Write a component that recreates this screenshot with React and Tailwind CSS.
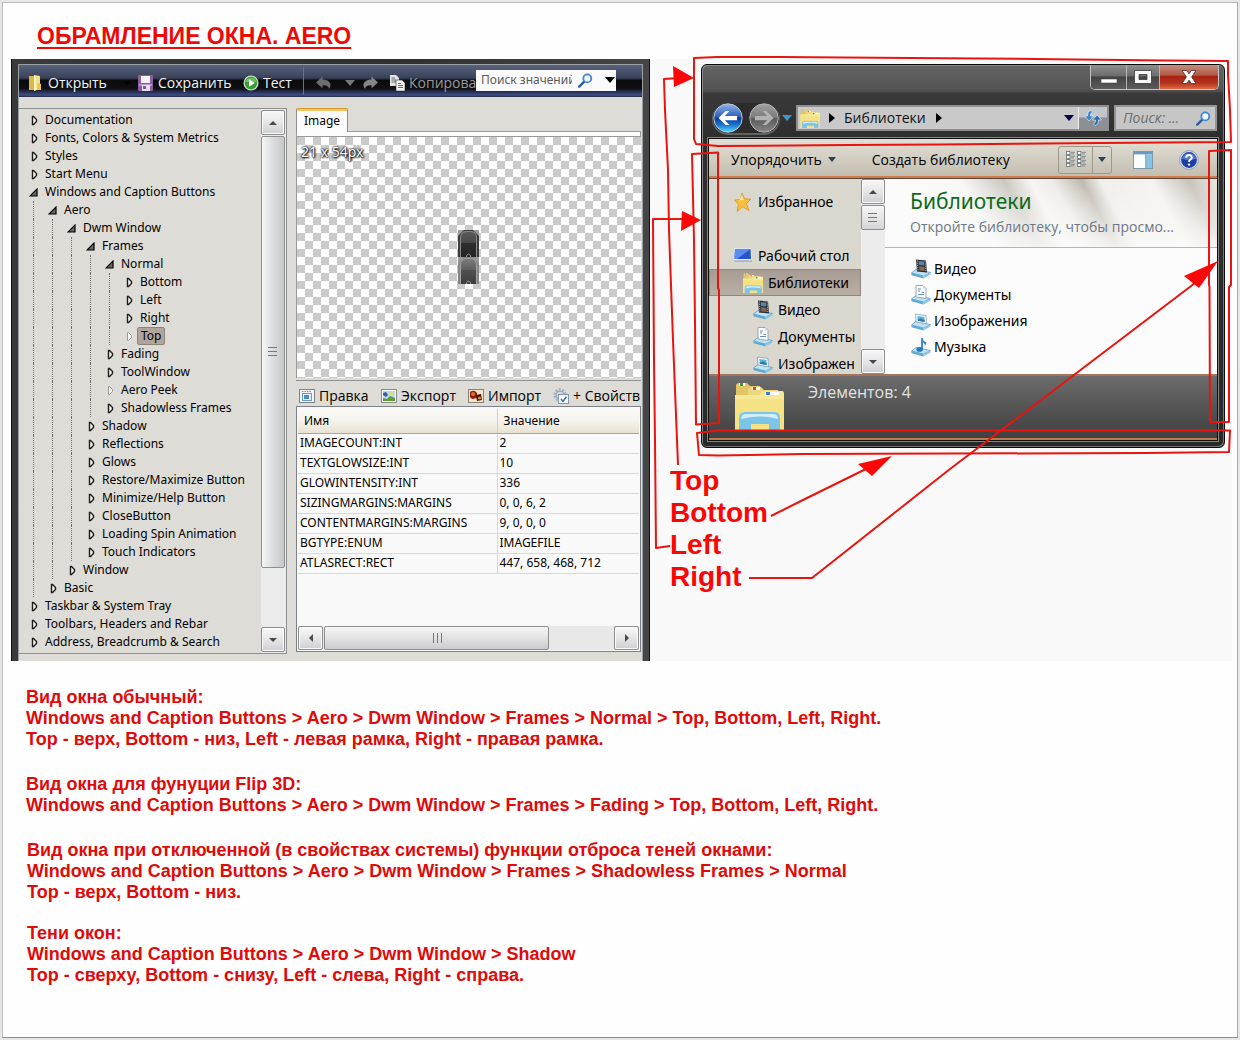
import React from "react";

const treeRows = [
  [0, "Documentation"],
  [0, "Fonts, Colors & System Metrics"],
  [0, "Styles"],
  [0, "Start Menu"],
  [0, "Windows and Caption Buttons", "open"],
  [1, "Aero", "open"],
  [2, "Dwm Window", "open"],
  [3, "Frames", "open"],
  [4, "Normal", "open"],
  [5, "Bottom"],
  [5, "Left"],
  [5, "Right"],
  [5, "Top", "selected"],
  [4, "Fading"],
  [4, "ToolWindow"],
  [4, "Aero Peek", "leaf"],
  [4, "Shadowless Frames"],
  [3, "Shadow"],
  [3, "Reflections"],
  [3, "Glows"],
  [3, "Restore/Maximize Button"],
  [3, "Minimize/Help Button"],
  [3, "CloseButton"],
  [3, "Loading Spin Animation"],
  [3, "Touch Indicators"],
  [2, "Window"],
  [1, "Basic"],
  [0, "Taskbar & System Tray"],
  [0, "Toolbars, Headers and Rebar"],
  [0, "Address, Breadcrumb & Search"],
];

const properties = [
  ["IMAGECOUNT:INT", "2"],
  ["TEXTGLOWSIZE:INT", "10"],
  ["GLOWINTENSITY:INT", "336"],
  ["SIZINGMARGINS:MARGINS", "0, 0, 6, 2"],
  ["CONTENTMARGINS:MARGINS", "9, 0, 0, 0"],
  ["BGTYPE:ENUM", "IMAGEFILE"],
  ["ATLASRECT:RECT", "447, 658, 468, 712"],
];

const notes = [
  {
    className: "ml-[23px] mt-[26px]",
    lines: [
      "Вид окна обычный:",
      "Windows and Caption Buttons > Aero > Dwm Window > Frames > Normal > Top, Bottom, Left, Right.",
      "Top - верх, Bottom - низ, Left - левая рамка, Right - правая рамка.",
    ],
  },
  {
    className: "ml-[23px] mt-6",
    lines: [
      "Вид окна для фунуции Flip 3D:",
      "Windows and Caption Buttons > Aero > Dwm Window > Frames > Fading > Top, Bottom, Left, Right.",
    ],
  },
  {
    className: "ml-6 mt-6",
    lines: [
      "Вид окна при отключенной (в свойствах системы) функции отброса теней окнами:",
      "Windows and Caption Buttons > Aero > Dwm Window > Frames > Shadowless Frames > Normal",
      "Top - верх, Bottom - низ.",
    ],
  },
  {
    className: "ml-6 mt-5",
    lines: [
      "Тени окон:",
      "Windows and Caption Buttons > Aero > Dwm Window > Shadow",
      "Top - сверху, Bottom - снизу, Left - слева, Right - справа.",
    ],
  },
];

/* ---------- icons ---------- */

function OpenFolderIcon() {
  return (
    <svg className="h-4 w-[14px] shrink-0" viewBox="0 0 14 16">
      <path d="M1 1 L7 1 L7 15 L1 15 Z" fill="#d9b94c" />
      <path d="M6 0 L12 1 L12 14 L6 16 Z" fill="#f3e08a" />
      <path d="M6 0 L8 2 L8 15 L6 16 Z" fill="#fff6c4" />
      <path d="M10 8 L13 9 L13 15 L9 15 Z" fill="#e6c65e" />
    </svg>
  );
}

function SaveIcon() {
  return (
    <svg className="h-4 w-[15px] shrink-0" viewBox="0 0 15 16">
      <rect x="0" y="0" width="15" height="16" rx="1" fill="#8a5f9e" />
      <rect x="3" y="1" width="9" height="7" fill="#f6f2f8" />
      <rect x="1" y="9" width="13" height="2" fill="#b795c6" />
      <rect x="4" y="10" width="8" height="6" fill="#e8e0ec" />
      <rect x="5" y="11" width="3" height="3" fill="#7d5c90" />
    </svg>
  );
}

function PlayIcon() {
  return (
    <svg className="h-4 w-4 shrink-0" viewBox="0 0 16 16">
      <circle cx="8" cy="8" r="7.5" fill="#dfeedd" />
      <circle cx="8" cy="8" r="6.4" fill="#3a9a35" />
      <path d="M2 7 A6.4 6.4 0 0 1 14 7 Z" fill="#6cc062" />
      <path d="M6 4.2 L11.8 8 L6 11.8 Z" fill="#fff" />
    </svg>
  );
}

function UndoArrow({ flip }) {
  return (
    <svg className={flip ? "h-[14px] w-[15px] shrink-0 -scale-x-100" : "h-[14px] w-[15px] shrink-0"} viewBox="0 0 15 14">
      <path d="M0 6.5 L6.5 0.5 L6.5 3.5 C11.5 3.5 14.5 6 14.5 9 C14.5 10.5 14 11.8 12.8 12.8 C12.8 10.5 10.5 9 6.5 9.3 L6.5 12.2 Z" fill={flip ? "#86868a" : "#6d6d72"} />
    </svg>
  );
}

function CopyIcon() {
  return (
    <svg className="h-4 w-[15px] shrink-0" viewBox="0 0 15 16">
      <path d="M0 0 H6 L9 3 V11 H0 Z" fill="#e4e4e4" />
      <path d="M1.5 3 H5 M1.5 5 H6 M1.5 7 H6" stroke="#666" />
      <path d="M6 5 H12 L15 8 V16 H6 Z" fill="#f4f4f4" stroke="#333" strokeWidth="0.6" />
      <path d="M8 8.5 H11 M8 10.5 H13 M8 12.5 H13" stroke="#666" />
    </svg>
  );
}

function MagnifierIcon() {
  return (
    <svg className="h-[15px] w-[15px] shrink-0" viewBox="0 0 15 15">
      <path d="M1.2 13.6 L6 8.8" stroke="#2d5f9e" strokeWidth="2.4" strokeLinecap="round" />
      <circle cx="9.3" cy="5.4" r="4" fill="#eef5fc" stroke="#4286cf" strokeWidth="1.8" />
    </svg>
  );
}

function TriangleDown({ color = "#000", wide }) {
  return (
    <svg className={wide ? "h-[6px] w-[10px] shrink-0" : "h-[5px] w-[8px] shrink-0"} viewBox="0 0 10 6" preserveAspectRatio="none">
      <path d="M0 0 H10 L5 6 Z" fill={color} />
    </svg>
  );
}

function TriangleRight() {
  return (
    <svg className="h-[10px] w-[6px] shrink-0" viewBox="0 0 6 10">
      <path d="M0 0 L6 5 L0 10 Z" fill="#000" />
    </svg>
  );
}

function TreeMarker({ state }) {
  if (state === "open") {
    return (
      <svg className="h-[9px] w-[9px]" viewBox="0 0 9 9">
        <path d="M8 1 V8 H1 Z" fill="#6a6a6a" stroke="#000" strokeWidth="1.2" />
      </svg>
    );
  }
  const faint = state === "leaf" || state === "selected";
  return (
    <svg className="ml-[2px] h-[11px] w-[9px]" viewBox="0 0 9 11">
      <path d="M2.5 1.5 V9.5 H3.5 L6.5 6.5 V4.5 L3.5 1.5 Z" fill="#f4f3f0" stroke={faint ? "#9a9a98" : "#1c1c1c"} strokeWidth={faint ? "1" : "1.4"} />
    </svg>
  );
}

function LibraryIcon({ className }) {
  return (
    <svg className={className} viewBox="0 0 50 48" preserveAspectRatio="xMidYMin slice">
      <path d="M2 4 Q2 1 5 1 H13 L16 4 H26 V44 H2 Z" fill="#e3c566" />
      <rect x="5" y="1" width="6" height="3" fill="#fff" />
      <rect x="6" y="1" width="3" height="3" fill="#3d9b3a" />
      <path d="M14 9 Q14 5 17 5 H27 L30 8 H44 V44 H14 Z" fill="#eed67c" />
      <rect x="18" y="5" width="8" height="3" fill="#fff" />
      <rect x="19" y="5" width="3" height="3" fill="#d04a2a" />
      <path d="M1 13 H25 L29 9 H48 Q50 9 50 12 V48 H1 Z" fill="#f6e896" />
      <rect x="31" y="10" width="14" height="3" fill="#fff" />
      <rect x="32" y="10" width="4" height="3" fill="#3a82c4" />
      <path d="M1 17 H50 V48 H1 Z" fill="#f3df7e" opacity="0.7" />
      <path d="M5 48 V36 Q5 30 11 30 H40 Q46 30 46 36 V48 H35 V42 H17 V48 Z" fill="#7cc4e8" />
      <path d="M7 37 Q7 32 12 32 H39 Q44 32 44 37 Q25 32 7 37 Z" fill="#d2eefa" />
    </svg>
  );
}

function StarIcon() {
  return (
    <svg className="h-5 w-[18px] shrink-0" viewBox="0 0 18 20">
      <path d="M8 1 L10.6 7 L17 7 L12.4 11.6 L15 18.5 L8.6 14.8 L3 19.4 L4.4 12.4 L0.6 8 L6.4 7.4 Z" fill="#f7bf3c" stroke="#dc9426" strokeWidth="0.8" />
      <path d="M8 3 L9.6 8 L5 8.6 Z" fill="#fde79a" />
    </svg>
  );
}

function DesktopIcon() {
  return (
    <svg className="h-[15px] w-[19px] shrink-0" viewBox="0 0 19 15">
      <path d="M1 0 H18 L19 12 H1 Z" fill="#dfe6f2" />
      <path d="M2 1 H17.5 L18 11 H1.5 Z" fill="#2555c8" />
      <path d="M2 1 H17.5 L4 11 H1.5 Z" fill="#5b8cf0" />
      <path d="M1 12.5 H19 V14 H2 Z" fill="#9db4cc" />
    </svg>
  );
}

function Tray() {
  return (
    <g>
      <path d="M0.5 14 L5 10.5 L19.5 13.5 L12.5 17 Z" fill="#bfe3f4" stroke="#4d94bb" strokeWidth="0.7" />
      <path d="M0.5 14 L12.5 17 V19.4 L0.5 16.2 Z" fill="#5fa9d2" />
      <path d="M12.5 17 L19.5 13.5 V15.6 L12.5 19.4 Z" fill="#8cc7e4" />
    </g>
  );
}

function LibraryItemIcon({ kind }) {
  return (
    <svg className="h-5 w-5 shrink-0" viewBox="0 0 20 20">
      <Tray />
      {kind === "video" && (
        <g>
          <path d="M5 0.5 L15 1.5 L16 13.5 L6 12.5 Z" fill="#262b33" />
          <path d="M7.6 2 L13 2.6 L13.3 6.6 L7.9 6 Z" fill="#5d84a6" />
          <path d="M8 7.2 L13.4 7.8 L13.8 12 L8.3 11.4 Z" fill="#83674e" />
          <path d="M6.4 1.5 L7 12" stroke="#dde" strokeWidth="0.9" strokeDasharray="1 1.2" />
          <path d="M14.2 2.3 L14.9 12.8" stroke="#dde" strokeWidth="0.9" strokeDasharray="1 1.2" />
        </g>
      )}
      {kind === "docs" && (
        <g>
          <path d="M5 0.5 H12 L15 3.5 V13.5 L5 12 Z" fill="#fbfcfe" stroke="#8895a8" strokeWidth="0.8" />
          <path d="M12 0.5 L12 3.5 H15 Z" fill="#c8d4e4" />
          <path d="M7 4 H10 M7 6 H9 M10.5 7.5 H13 M7 9.5 H13" stroke="#5a7fb5" strokeWidth="0.9" />
        </g>
      )}
      {kind === "images" && (
        <g>
          <path d="M4.5 3 L15 4.5 L15.5 12.8 L5 11 Z" fill="#f2f7fb" stroke="#86a2ba" strokeWidth="0.8" />
          <path d="M6.4 5 L13.4 6 L13.7 11 L6.8 9.8 Z" fill="#57b2dc" />
          <path d="M6.7 8.4 L10 7.6 L13.7 9.4 V11 L6.8 9.8 Z" fill="#2f7a94" />
        </g>
      )}
      {kind === "music" && (
        <g>
          <path d="M11 1 V12" stroke="#1c6eb8" strokeWidth="1.6" />
          <path d="M11 1 Q12 4 15.5 5.5 Q14.5 8 13.5 9 Q14.5 6.6 11 5 Z" fill="#2f86cf" />
          <ellipse cx="8.6" cy="12.4" rx="3.2" ry="2.4" fill="#2479c4" />
        </g>
      )}
    </svg>
  );
}

function NavCircle({ back }) {
  return (
    <svg className="h-[30px] w-[30px]" viewBox="0 0 30 30">
      <defs>
        <linearGradient id="navBlue" x1="0" y1="0" x2="0" y2="1">
          <stop offset="0" stopColor="#8fb4e8" />
          <stop offset="0.45" stopColor="#2e62bb" />
          <stop offset="0.5" stopColor="#0c3a92" />
          <stop offset="0.75" stopColor="#1a78d0" />
          <stop offset="1" stopColor="#59dcff" />
        </linearGradient>
        <linearGradient id="navGray" x1="0" y1="0" x2="0" y2="1">
          <stop offset="0" stopColor="#a2a2a2" />
          <stop offset="0.48" stopColor="#7a7a7a" />
          <stop offset="0.52" stopColor="#5a5a5a" />
          <stop offset="1" stopColor="#868686" />
        </linearGradient>
      </defs>
      <circle cx="15" cy="15" r="14.2" fill={back ? "url(#navBlue)" : "url(#navGray)"} stroke={back ? "#b9c6d8" : "#b4b4b4"} strokeWidth="1" />
      {back ? (
        <path d="M5.5 15 L12.6 8 H16.4 L11.8 13 H24 V17.2 H11.8 L16.4 22 H12.6 Z" fill="#fff" />
      ) : (
        <path d="M24.5 15 L17.4 8 H13.6 L18.2 13 H6 V17.2 H18.2 L13.6 22 H17.4 Z" fill="#b2b2b2" />
      )}
    </svg>
  );
}

function RefreshIcon() {
  return (
    <svg className="h-4 w-[18px]" viewBox="0 0 18 16">
      <path d="M7 0.5 C4.5 1 3.5 3 3.5 6 H0.5 L5 11 L9.5 6 H6.5 C6.5 4 7 3 8.5 2 Z" fill="#3e86cc" stroke="#e4eef8" strokeWidth="0.7" />
      <path d="M11 15.5 C13.5 15 14.5 13 14.5 10 H17.5 L13 5 L8.5 10 H11.5 C11.5 12 11 13 9.5 14 Z" fill="#2b6db6" stroke="#e4eef8" strokeWidth="0.7" />
    </svg>
  );
}

function ViewIcon() {
  return (
    <svg className="h-[17px] w-5" viewBox="0 0 20 17">
      {[0, 11].map((x) =>
        [0.5, 4.5, 8.5, 12.5].map((y) => (
          <g key={x + "-" + y}>
            <rect x={x + 0.5} y={y} width="3.4" height="3" fill="#fff" stroke="#6d7c82" strokeWidth="0.9" />
            <path d={`M${x + 5} ${y + 0.8} h4 M${x + 5} ${y + 2.4} h3`} stroke="#6d7c82" strokeWidth="0.8" />
          </g>
        ))
      )}
    </svg>
  );
}

function PaneIcon() {
  return (
    <svg className="h-[18px] w-5" viewBox="0 0 20 18">
      <rect x="0.5" y="0.5" width="19" height="17" fill="#fdfdfd" stroke="#7d97ab" />
      <rect x="1" y="1" width="18" height="2.4" fill="#6c9ac4" />
      <rect x="13" y="3.4" width="6" height="13.6" fill="#86c6e2" />
      <path d="M12.7 1 V17" stroke="#5d8dae" strokeWidth="0.8" />
    </svg>
  );
}

function HelpIcon() {
  return (
    <svg className="h-5 w-5" viewBox="0 0 20 20">
      <circle cx="10" cy="10" r="9.4" fill="#d5dbec" stroke="#8b93ad" strokeWidth="0.8" />
      <circle cx="10" cy="10" r="7.9" fill="#1d3fa4" />
      <path d="M2.8 8.6 A7.5 7.5 0 0 1 17.2 8.6 Q10 12 2.8 8.6 Z" fill="#5277d2" />
      <path d="M7.2 7.8 C7.2 4 13 4.2 12.8 7.6 C12.7 9.6 10 9.6 10 12" fill="none" stroke="#fff" strokeWidth="1.9" />
      <circle cx="10" cy="14.6" r="1.2" fill="#fff" />
    </svg>
  );
}

function FormIcon() {
  return (
    <svg className="h-[14px] w-4 shrink-0" viewBox="0 0 16 14">
      <rect x="0.5" y="0.5" width="15" height="13" fill="#f3f4f6" stroke="#7b828c" />
      <rect x="3.5" y="4.5" width="9" height="7" fill="#e9f2fa" stroke="#6c9cc4" />
      <rect x="5" y="6" width="5" height="4" fill="#4b8fc7" />
      <path d="M3 2.5 H13" stroke="#7f93a8" strokeDasharray="1.5 1" />
    </svg>
  );
}

function ExportIcon() {
  return (
    <svg className="h-[14px] w-4 shrink-0" viewBox="0 0 16 14">
      <rect x="0.5" y="0.5" width="15" height="13" fill="#fff" stroke="#8a8a86" />
      <rect x="2" y="2" width="12" height="10" fill="#b4daf6" />
      <path d="M2 12 V9 L6 10 L9 7 L14 9 V12 Z" fill="#5f9c3c" />
      <path d="M2 4 L5 3 L7 6 L5 8 L2 6 Z" fill="#375e9f" />
      <path d="M7 7 L9 3 L13 4 L13 7 Z" fill="#dfe06a" />
    </svg>
  );
}

function ImportIcon() {
  return (
    <svg className="h-[14px] w-4 shrink-0" viewBox="0 0 16 14">
      <rect x="0.5" y="0.5" width="15" height="13" fill="#f3e2c7" stroke="#8a8378" />
      <path d="M2 3 Q6 0 9 4 L9 9 L4 10 L2 8 Z" fill="#8f1c10" />
      <circle cx="5" cy="5" r="2" fill="#d9722a" />
      <path d="M8 6 L13 5 L14 11 L9 12 Z" fill="#4a160c" />
      <circle cx="11.5" cy="9" r="1.6" fill="#d88a3c" />
    </svg>
  );
}

function GearCheckIcon() {
  return (
    <svg className="h-4 w-4 shrink-0" viewBox="0 0 16 16">
      <circle cx="7" cy="7" r="5" fill="none" stroke="#a3b6c8" strokeWidth="3.4" strokeDasharray="2 1.1" />
      <circle cx="7" cy="7" r="4" fill="#cbd9e4" stroke="#8fa5ba" />
      <rect x="5.5" y="6.5" width="10" height="9" fill="#f6fafd" stroke="#8496a8" />
      <path d="M8 11 L10 13.4 L13.4 8.8" fill="none" stroke="#2878b8" strokeWidth="1.5" />
    </svg>
  );
}

/* ---------- scroll bars ---------- */

function ScrollArrow({ direction, className }) {
  const paths = {
    up: "M1 7 L5 3 L9 7 Z",
    down: "M1 3 L5 7 L9 3 Z",
    left: "M7 1 L3 5 L7 9 Z",
    right: "M3 1 L7 5 L3 9 Z",
  };
  return (
    <button
      type="button"
      aria-label={direction}
      className={"flex shrink-0 items-center justify-center rounded-[2px] border border-[#8d8d8d] bg-linear-to-b from-[#f8f8f8] via-[#e6e6e8] to-[#cfcfd3] shadow-[inset_0_0_0_1px_#fafafa] " + className}
    >
      <svg className="h-[10px] w-[10px]" viewBox="0 0 10 10">
        <path d={paths[direction]} fill="#4a4a4a" />
      </svg>
    </button>
  );
}

function Grip({ vertical }) {
  return (
    <svg className="h-3 w-3" viewBox="0 0 12 12">
      {vertical ? (
        <path d="M2.5 1 V11 M6.5 1 V11 M10.5 1 V11" stroke="#777" />
      ) : (
        <path d="M1 1.5 H10 M1 5.5 H10 M1 9.5 H10" stroke="#777" />
      )}
    </svg>
  );
}

/* ---------- style editor ---------- */

function ToolbarButton({ icon, children, className = "" }) {
  return (
    <button type="button" className={"flex items-center whitespace-nowrap " + className}>
      {icon}
      <span>{children}</span>
    </button>
  );
}

function EditorToolbar() {
  return (
    <div className="flex h-8 items-center bg-[linear-gradient(180deg,#59627c_0%,#3c445c_38%,#2a3044_44%,#0b0b0d_47%,#101014_74%,#2c3760_86%,#3e4d86_94%,#23283c_100%)] pt-1 font-['Open_Sans','Noto_Sans',sans-serif] text-sm text-[#f2f4f8]">
      <ToolbarButton icon={<OpenFolderIcon />} className="ml-[9px] w-[88px] gap-[6px]">Открыть</ToolbarButton>
      <span className="flex w-[22px] justify-center">
        <TriangleDown color="#050505" />
      </span>
      <ToolbarButton icon={<SaveIcon />} className="w-[105px] gap-[5px]">Сохранить</ToolbarButton>
      <ToolbarButton icon={<PlayIcon />} className="w-[60px] gap-1">Тест</ToolbarButton>
      <span className="-mt-1 h-7 w-px bg-[#6b7288]" />
      <button type="button" aria-label="Отменить" className="ml-3">
        <UndoArrow />
      </button>
      <span className="ml-[14px] mr-2">
        <TriangleDown color="#77777b" wide />
      </span>
      <button type="button" aria-label="Повторить" className="mr-3">
        <UndoArrow flip />
      </button>
      <ToolbarButton icon={<CopyIcon />} className="w-[86px] gap-1 text-[#98989c]">Копирова</ToolbarButton>
      <div className="-mt-[6px] mr-[26px] flex h-[21px] min-w-0 flex-1 items-center bg-[#fafafa]">
        <input
          aria-label="Поиск значений"
          placeholder="Поиск значений"
          className="ml-[5px] w-[91px] min-w-0 bg-transparent font-['Noto_Sans',sans-serif] text-xs text-[#444] outline-none placeholder:text-[#5a5a5a]"
        />
        <span className="ml-[6px] mr-3">
          <MagnifierIcon />
        </span>
        <TriangleDown wide />
      </div>
    </div>
  );
}

function TreePanel() {
  return (
    <div className="flex w-[268px] shrink-0 border border-l-0 border-[#8f8f8f] bg-[#dedcd6]">
      <ul role="tree" className="min-w-0 flex-1 pb-[2px] pt-[2px] font-['Noto_Sans',sans-serif] text-xs text-black">
        {treeRows.map(([depth, label, state]) => (
          <li key={label + depth} role="treeitem" className="flex h-[18px] items-center pl-[5px]">
            {Array.from({ length: depth }, (_, i) => (
              <span key={i} className="h-full w-[19px] shrink-0 pl-[9px]">
                <span className="block h-full w-px border-l border-dotted border-[#6f6f6f]" />
              </span>
            ))}
            <span className="flex h-full w-[19px] shrink-0 items-center justify-center">
              <TreeMarker state={state} />
            </span>
            <span
              className={
                state === "selected"
                  ? "-ml-px whitespace-nowrap rounded-[2px] border border-[#8c837b] bg-[#b0a59b] px-[3px] leading-4"
                  : "whitespace-nowrap pl-[2px] leading-4"
              }
            >
              {label}
            </span>
          </li>
        ))}
      </ul>
      <div className="flex w-[25px] shrink-0 flex-col bg-[#ebebeb] py-px pr-[1px]">
        <ScrollArrow direction="up" className="h-[25px]" />
        <div className="mt-px flex h-[432px] items-center justify-center rounded-[2px] border border-[#909090] bg-linear-to-r from-[#f6f6f6] via-[#dcdde0] to-[#c6c7cb]">
          <Grip />
        </div>
        <div className="flex-1" />
        <ScrollArrow direction="down" className="h-[25px]" />
      </div>
    </div>
  );
}

function AtlasPiece({ light }) {
  const id = light ? "atlasLight" : "atlasDark";
  return (
    <svg className="block h-[27px] w-[21px]" viewBox="0 0 21 27">
      <defs>
        <linearGradient id={id} x1="0" y1="0" x2="0" y2="1">
          <stop offset="0" stopColor={light ? "#7c7c7c" : "#5c5c5c"} />
          <stop offset="0.44" stopColor={light ? "#606060" : "#484848"} />
          <stop offset="0.46" stopColor={light ? "#505050" : "#2e2e2e"} />
          <stop offset="1" stopColor={light ? "#3e3e3e" : "#242424"} />
        </linearGradient>
      </defs>
      <rect width="21" height="27" fill={light ? "#858585" : "#3c3c3c"} />
      <path d="M0 0 H6 L0 6 Z M21 0 H15 L21 6 Z" fill="#9c9c9c" />
      <path d="M2.5 27 V8 Q2.5 1.5 8.5 1.5 H12.5 Q18.5 1.5 18.5 8 V27" fill={`url(#${id})`} stroke={light ? "#a4a4a4" : "#8d8d8d"} />
      <path d="M8.5 27 V25.5 Q10.5 22.5 12.5 25.5 V27" fill="none" stroke="#9d9d9d" />
    </svg>
  );
}

function ImagePreview() {
  return (
    <div>
      <div className="flex h-[23px] items-stretch">
        <button type="button" role="tab" className="relative -mb-px w-[52px] rounded-t-[2px] border border-b-0 border-[#8e8f8f] border-t-[#d9982f] bg-[#fcfcfc] font-['Noto_Sans',sans-serif] text-xs text-black shadow-[inset_0_2px_0_#f5c463]">
          Image
        </button>
      </div>
      <div className="h-[6px] border border-[#9a9a98] bg-[#fcfcfc]" />
      <div className="flex h-[241px] flex-col border-l border-[#9a9a98] bg-white bg-[conic-gradient(#fff_0_25%,#cbcbcb_0_50%,#fff_0_75%,#cbcbcb_0)] bg-size-[16px_16px]">
        <span className="mt-[6px] pl-1 font-['Noto_Sans',sans-serif] text-sm leading-[18px] text-white [text-shadow:0_0_2px_#000,0_0_2px_#000,1px_1px_2px_#000]">21 x 54px</span>
        <div className="mr-[2px] mt-[69px] self-center">
          <AtlasPiece />
          <AtlasPiece light />
        </div>
      </div>
      <div className="mt-[2px] h-px bg-[#8f8f8f]" />
    </div>
  );
}

function PropertyList() {
  return (
    <div className="mb-[2px] flex flex-1 flex-col border border-[#7d8289] bg-[#f9f9f9]">
      <div className="flex-1 px-px pt-[2px]">
        <table className="w-full table-fixed border-collapse font-['Noto_Sans',sans-serif] text-xs text-black">
          <thead>
            <tr className="h-6 bg-linear-to-b from-[#fbfaf7] via-[#f6f3ec] to-[#e9e2d3]">
              <th className="w-[199px] border-b border-r border-b-[#b3a585] border-r-[#d5cfc2] pl-[6px] text-left font-normal">Имя</th>
              <th className="border-b border-b-[#b3a585] pl-[6px] text-left font-normal">Значение</th>
            </tr>
          </thead>
          <tbody>
            {properties.map(([name, value]) => (
              <tr key={name} className="h-5">
                <td className="border-b border-r border-[#d8d8d6] pl-[2px] leading-4">{name}</td>
                <td className="border-b border-[#d8d8d6] pl-[2px] leading-4">{value}</td>
              </tr>
            ))}
          </tbody>
        </table>
      </div>
      <div className="flex h-[25px] px-px pb-px">
        <div className="flex min-w-0 flex-1 bg-[#e8e8e8]">
          <ScrollArrow direction="left" className="w-[25px]" />
          <div className="ml-px flex w-[225px] items-center justify-center rounded-[2px] border border-[#8d8d8d] bg-linear-to-b from-[#f6f6f6] via-[#e2e2e4] to-[#cbcbcf]">
            <Grip vertical />
          </div>
          <div className="flex-1" />
          <ScrollArrow direction="right" className="w-[25px]" />
        </div>
      </div>
    </div>
  );
}

function EditorWindow() {
  return (
    <div className="flex w-[639px] shrink-0 flex-col border-x border-[#111] bg-[#3a3a3c] bg-[linear-gradient(90deg,#3a3a3c,#303030_60%,#464646)] px-[6px] pt-[5px]">
      <div className="flex flex-1 flex-col border-x border-t border-[#9aa0a4] bg-[#dedcd6]">
        <EditorToolbar />
        <div className="flex flex-1 gap-[9px] pb-[7px] pr-px pt-[11px]">
          <TreePanel />
          <div className="flex min-w-0 flex-1 flex-col">
            <ImagePreview />
            <div className="flex h-[25px] items-center pl-[3px] pt-[5px] font-['Open_Sans','Noto_Sans',sans-serif] text-sm text-black">
              <ToolbarButton icon={<FormIcon />} className="w-[82px] shrink-0 gap-1">Правка</ToolbarButton>
              <ToolbarButton icon={<ExportIcon />} className="w-[87px] shrink-0 gap-1">Экспорт</ToolbarButton>
              <ToolbarButton icon={<ImportIcon />} className="w-[85px] shrink-0 gap-1">Импорт</ToolbarButton>
              <ToolbarButton icon={<GearCheckIcon />} className="gap-1">+ Свойств</ToolbarButton>
            </div>
            <PropertyList />
          </div>
        </div>
      </div>
    </div>
  );
}

/* ---------- explorer window ---------- */

function CaptionButtons() {
  return (
    <div className="flex h-[25px] justify-end pr-[5px]">
      <div className="flex overflow-hidden rounded-b-[5px] border border-t-0 border-[#c4c4c4] bg-linear-to-b from-[#8d8d8d] from-45% to-[#3f3f3f] to-50%">
        <button type="button" aria-label="Свернуть" className="flex w-9 items-center justify-center border-r border-[#b4b4b4] bg-[linear-gradient(180deg,#8f8f8f_0%,#6c6c6c_45%,#434343_50%,#5c5c5c_100%)]">
          <svg className="h-[14px] w-4" viewBox="0 0 16 14">
            <rect x="0" y="9" width="16" height="4" fill="#fff" stroke="#444" strokeWidth="0.6" />
          </svg>
        </button>
        <button type="button" aria-label="Развернуть" className="flex w-[33px] items-center justify-center border-r border-[#b4b4b4] bg-[linear-gradient(180deg,#8f8f8f_0%,#6c6c6c_45%,#434343_50%,#5c5c5c_100%)]">
          <svg className="h-[14px] w-[18px]" viewBox="0 0 18 14">
            <path d="M0.5 0.5 H17.5 V13.5 H0.5 Z M5 4.5 V9.5 H13 V4.5 Z" fill="#f8f8f8" fillRule="evenodd" stroke="#3c3c3c" strokeWidth="0.8" />
          </svg>
        </button>
        <button type="button" aria-label="Закрыть" className="flex w-[58px] items-center justify-center bg-[linear-gradient(180deg,#c58d80_0%,#b45a48_42%,#a62411_48%,#b3321c_75%,#dc6a48_100%)]">
          <svg className="h-[14px] w-4" viewBox="0 0 16 14">
            <path d="M1 0.5 H5.6 L8 3.8 L10.4 0.5 H15 L10.6 7 L15 13.5 H10.4 L8 10.2 L5.6 13.5 H1 L5.4 7 Z" fill="#fff" stroke="#4d2a26" strokeWidth="0.8" />
          </svg>
        </button>
      </div>
    </div>
  );
}

function AddressRow() {
  return (
    <div className="mt-[13px] flex h-[30px] items-center pl-[11px] pr-[7px]">
      <div className="flex items-center gap-[6px] rounded-full bg-[#2c2c2c] shadow-[0_1px_0_1px_#626262]">
        <button type="button" aria-label="Назад">
          <NavCircle back />
        </button>
        <button type="button" aria-label="Вперёд">
          <NavCircle />
        </button>
      </div>
      <span className="ml-[3px] mr-1">
        <TriangleDown color="#3f95d6" wide />
      </span>
      <div className="flex h-[26px] min-w-0 flex-1 items-stretch border-2 border-[#8e8e8e] bg-[#c9c9c9]">
        <div className="flex min-w-0 flex-1 items-center pl-[2px] font-['Open_Sans','Noto_Sans',sans-serif] text-sm text-[#111]">
          <LibraryIcon className="h-[19px] w-[20px] shrink-0" />
          <span className="mx-[9px]">
            <TriangleRight />
          </span>
          <button type="button">Библиотеки</button>
          <span className="ml-[10px]">
            <TriangleRight />
          </span>
          <span className="ml-auto mr-1">
            <TriangleDown color="#05054a" wide />
          </span>
        </div>
        <button type="button" aria-label="Обновить" className="flex w-[29px] items-center justify-center border-l border-[#efefef] bg-linear-to-b from-[#c2c6ca] from-45% to-[#8c9094] to-50%">
          <RefreshIcon />
        </button>
      </div>
      <div className="ml-[5px] flex h-[26px] w-[103px] shrink-0 items-center border-2 border-[#949494] bg-[#c6c6c6] pr-1">
        <input
          aria-label="Поиск"
          placeholder="Поиск: ..."
          className="ml-[7px] w-[68px] bg-transparent font-['Open_Sans','Noto_Sans',sans-serif] text-sm italic outline-none placeholder:text-[#6e6e6e]"
        />
        <span className="ml-auto">
          <MagnifierIcon />
        </span>
      </div>
    </div>
  );
}

function CommandBar() {
  return (
    <div className="flex h-[39px] items-center border-b-2 border-[#cf7d4c] bg-linear-to-b from-[#e2dfd6] to-[#c3beb0] pl-[22px] pr-[18px] pt-1 font-['Open_Sans','Noto_Sans',sans-serif] text-sm text-black">
      <button type="button" className="flex items-center gap-[6px]">
        <span>Упорядочить</span>
        <TriangleDown color="#24425c" />
      </button>
      <button type="button" className="ml-9 whitespace-nowrap">Создать библиотеку</button>
      <div className="ml-auto flex h-7 rounded-[3px] border border-[#9c988c]">
        <button type="button" aria-label="Вид" className="flex w-[34px] items-center justify-center border-r border-[#9c988c]">
          <ViewIcon />
        </button>
        <button type="button" aria-label="Другие варианты" className="flex w-[18px] items-center justify-center">
          <TriangleDown color="#24425c" />
        </button>
      </div>
      <button type="button" aria-label="Область просмотра" className="ml-[21px]">
        <PaneIcon />
      </button>
      <button type="button" aria-label="Справка" className="ml-[26px]">
        <HelpIcon />
      </button>
    </div>
  );
}

const navItems = [
  ["Рабочий стол", "pl-6", <DesktopIcon />, "gap-[6px]"],
  ["Библиотеки", "pl-[33px] bg-linear-to-b from-[#a89d94] to-[#b8aea4] border border-[#8f867e]", <LibraryIcon className="h-5 w-5 shrink-0" />, "gap-[5px]"],
  ["Видео", "pl-11", <LibraryItemIcon kind="video" />, "gap-[5px]"],
  ["Документы", "pl-11", <LibraryItemIcon kind="docs" />, "gap-[5px]"],
  ["Изображен", "pl-11", <LibraryItemIcon kind="images" />, "gap-[5px]"],
];

const libraries = [
  ["video", "Видео"],
  ["docs", "Документы"],
  ["images", "Изображения"],
  ["music", "Музыка"],
];

function ExplorerBody() {
  return (
    <div className="flex h-[196px] border-t border-[#5a4638] font-['Noto_Sans',sans-serif] text-sm text-black">
      <nav className="flex w-[152px] shrink-0 flex-col overflow-hidden bg-[#dad7ce]">
        <a href="#favorites" className="mb-[27px] mt-[9px] flex h-[27px] shrink-0 items-center gap-[6px] pl-[25px]">
          <StarIcon />
          <span>Избранное</span>
        </a>
        {navItems.map(([label, className, icon, gap]) => (
          <a key={label} href="#nav" className={"flex h-[27px] shrink-0 items-center whitespace-nowrap " + gap + " " + className}>
            {icon}
            <span>{label}</span>
          </a>
        ))}
      </nav>
      <div className="flex w-6 shrink-0 flex-col bg-[#ececec]">
        <ScrollArrow direction="up" className="h-[25px]" />
        <div className="mt-px flex h-[25px] items-center justify-center rounded-[2px] border border-[#8d8d8d] bg-linear-to-b from-[#f6f6f6] to-[#d5d5d8]">
          <Grip />
        </div>
        <div className="flex-1" />
        <ScrollArrow direction="down" className="h-[25px]" />
      </div>
      <div className="min-w-0 flex-1 bg-[#fcfcfc]">
        <div className="h-[69px] overflow-hidden border-b border-[#b9b6a8] bg-[linear-gradient(180deg,rgba(255,255,255,0)_0%,rgba(250,250,250,0.85)_100%),linear-gradient(62deg,#fdfdfd_0%,#f7f7f5_30%,#c9c6be_42%,#f6f5f3_49%,#ecebe7_55%,#bcb7ac_63%,#efeeeb_68%,#f4f3f0_82%,#c6c2b8_92%,#e8e6e1_100%)] pl-[25px] pt-2">
          <h2 className="text-[21px] leading-7 text-[#0d6a1c]">Библиотеки</h2>
          <p className="truncate font-['Open_Sans','Noto_Sans',sans-serif] text-sm leading-6 text-[#6c7785]">Откройте библиотеку, чтобы просмо...</p>
        </div>
        <ul className="pl-[26px] pt-2">
          {libraries.map(([kind, label]) => (
            <li key={kind} className="flex h-[26px] items-center gap-[3px]">
              <LibraryItemIcon kind={kind} />
              <span>{label}</span>
            </li>
          ))}
        </ul>
      </div>
    </div>
  );
}

function ExplorerWindow() {
  return (
    <div className="mr-[7px] rounded-[6px] border border-[#0b0b0b] bg-[linear-gradient(180deg,#646464_0px,#545454_24px,#4a4a4a_27px,#3a3a3a_28px,#2e2e2e_72px,#292929_100%)] shadow-[inset_1px_1px_0_#8a8a8a,inset_-1px_-1px_0_#777]">
      <CaptionButtons />
      <AddressRow />
      <div className="mx-[6px] mb-[6px] mt-[5px] border border-[#0e0e0e] shadow-[0_0_0_1px_#858585]">
        <CommandBar />
        <ExplorerBody />
        <div className="flex h-[66px] overflow-hidden border-y-2 border-b-[#b87c50] border-t-[#a4745a] bg-linear-to-b from-[#6c6c6c] to-[#404040] pl-[25px] pt-[6px]">
          <LibraryIcon className="h-12 w-[50px] shrink-0" />
          <span className="ml-6 font-['Open_Sans','Noto_Sans',sans-serif] text-[16px] leading-5 text-[#e2e2e2]">Элементов: 4</span>
        </div>
      </div>
    </div>
  );
}

/* Hand-drawn outlines and arrows laid over the explorer window. */
function Annotations() {
  return (
    <svg className="pointer-events-none absolute inset-0 h-full w-full overflow-visible" viewBox="650 59 582 602" preserveAspectRatio="none">
      <g fill="none" stroke="#e8140f" strokeWidth="2" strokeLinejoin="round">
        <path d="M694 58 L717 57 L780 57 L910 58 L1036 59 L1164 60.5 L1228 61 L1228 74 L1230 110 L1231 142 L1100 143 L940 144.5 L848 145 L718 146 L696 144 L694 139 Z" />
        <path d="M692 154 L718 152.5 L718 288 L719 290 L719 423 L696 424.5 L695 323 L694 240 Z" />
        <path d="M697 433 L718 430.5 L1230 430.5 L1229 452 L1145 453 L803 454 L718 455.5 L699 455 Z" />
        <path d="M1209 151 L1231 150 L1231 285 L1229 287 L1229 422 L1210 422 L1209.5 287 L1209 285 Z" />
        <path d="M680 78 L664 79 L665 110 L668 170 L669 230 L673 340 L677 440 L678 465" />
        <path d="M690 219 L653 219 L654 360 L655 440 L656 548 L670 546" />
        <path d="M771 516 L805 499 L870 467" />
        <path d="M749 578 L812 578 L950 469 L1199 280" />
      </g>
      <g fill="#fb0707">
        <path d="M673 66 L694 78 L674 87 Z" />
        <path d="M682 211 L701 220 L681 231 Z" />
        <path d="M858 464 L892 456 L872 476 Z" />
        <path d="M1184 276 L1218 261 L1199 288 Z" />
      </g>
    </svg>
  );
}

export default function App() {
  return (
    <div className="flex min-h-screen flex-col bg-[#e6e6e6] p-[2px] font-['Liberation_Sans',Arial,sans-serif]">
      <main className="flex-1 border border-[#bdbdbd] border-b-[#8c8c8c] border-r-[#a8a8a8] bg-[#fefefe] pb-4">
        <h1 className="mb-[7px] ml-[34px] mt-[17px] text-[23px] font-bold leading-8 text-[#ee0806] underline decoration-2 underline-offset-[3px]">ОБРАМЛЕНИЕ ОКНА. AERO</h1>
        <section className="ml-2 mr-[5px] flex bg-[#f9f9f9]">
          <EditorWindow />
          <div className="relative min-w-0 flex-1 pl-[51px] pt-[5px]">
            <ExplorerWindow />
            <Annotations />
            <ul className="-ml-[31px] mt-[17px] text-[28px] font-bold leading-8 text-[#fb0505]">
              <li>Top</li>
              <li>Bottom</li>
              <li>Left</li>
              <li>Right</li>
            </ul>
          </div>
        </section>
        {notes.map(({ className, lines }) => (
          <p key={lines[0]} className={"text-lg font-bold leading-[21px] text-[#e00a08] " + className}>
            {lines.map((line) => (
              <span key={line} className="block">{line}</span>
            ))}
          </p>
        ))}
      </main>
    </div>
  );
}
